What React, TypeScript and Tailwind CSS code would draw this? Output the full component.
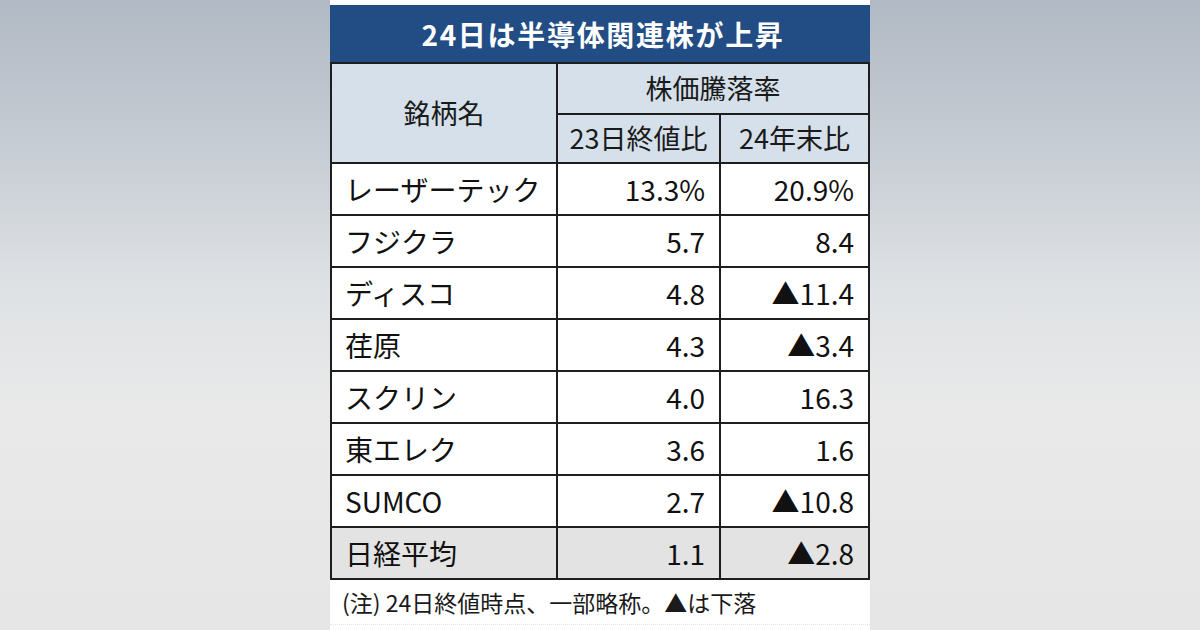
import * as React from 'react';

type Row = { name: string; day: string; year: string; shaded?: boolean };

const ROWS: Row[] = [
  { name: 'レーザーテック', day: '13.3%', year: '20.9%' },
  { name: 'フジクラ', day: '5.7', year: '8.4' },
  { name: 'ディスコ', day: '4.8', year: '▲11.4' },
  { name: '荏原', day: '4.3', year: '▲3.4' },
  { name: 'スクリン', day: '4.0', year: '16.3' },
  { name: '東エレク', day: '3.6', year: '1.6' },
  { name: 'SUMCO', day: '2.7', year: '▲10.8' },
  { name: '日経平均', day: '1.1', year: '▲2.8', shaded: true },
];

function HeadCell({ children, className = '' }: { children: React.ReactNode; className?: string }) {
  return (
    <div className={`flex items-center justify-center bg-[#d5e0ea] text-[27px] text-[#1a1a1a] ${className}`}>
      {children}
    </div>
  );
}

export default function App(): React.ReactElement {
  return (
    <div className="flex h-[630px] w-[1200px] justify-center bg-[linear-gradient(180deg,#b1b9c4_0%,#c8ced5_25%,#dee1e4_45%,#e9e9e9_65%,#e6e6e6_100%)] font-['Noto_Sans_CJK_JP','Noto_Sans',sans-serif]">
      <div className="flex h-full w-[540px] flex-col bg-white pt-[5px]">
        <div className="flex h-[57px] items-center justify-center bg-[#214d84] pl-[6px] text-[28px] font-bold tracking-[1.7px] text-white">
          24日は半導体関連株が上昇
        </div>

        <div className="grid grid-cols-[224px_161px_147px] grid-rows-[49px_47px_repeat(8,50px)] gap-[2px] bg-[#1e1e1e] p-[2px]">
          <HeadCell className="row-span-2">銘柄名</HeadCell>
          <HeadCell className="col-span-2">株価騰落率</HeadCell>
          <HeadCell>23日終値比</HeadCell>
          <HeadCell>24年末比</HeadCell>

          {ROWS.map((row) => {
            const bg = row.shaded ? 'bg-[#e3e3e3]' : 'bg-white';
            return (
              <React.Fragment key={row.name}>
                <div className={`flex items-center pl-[13px] text-[28px] text-[#111] ${bg}`}>{row.name}</div>
                <div className={`flex items-center justify-end pr-[14px] text-[28px] text-[#111] ${bg}`}>{row.day}</div>
                <div className={`flex items-center justify-end pr-[14px] text-[28px] text-[#111] ${bg}`}>{row.year}</div>
              </React.Fragment>
            );
          })}
        </div>

        <div className="flex h-[45px] items-center border-b border-dotted border-[#e4e4e4] pl-[12px] text-[23px] text-[#1a1a1a]">
          (注) 24日終値時点、一部略称。▲は下落
        </div>
      </div>
    </div>
  );
}
